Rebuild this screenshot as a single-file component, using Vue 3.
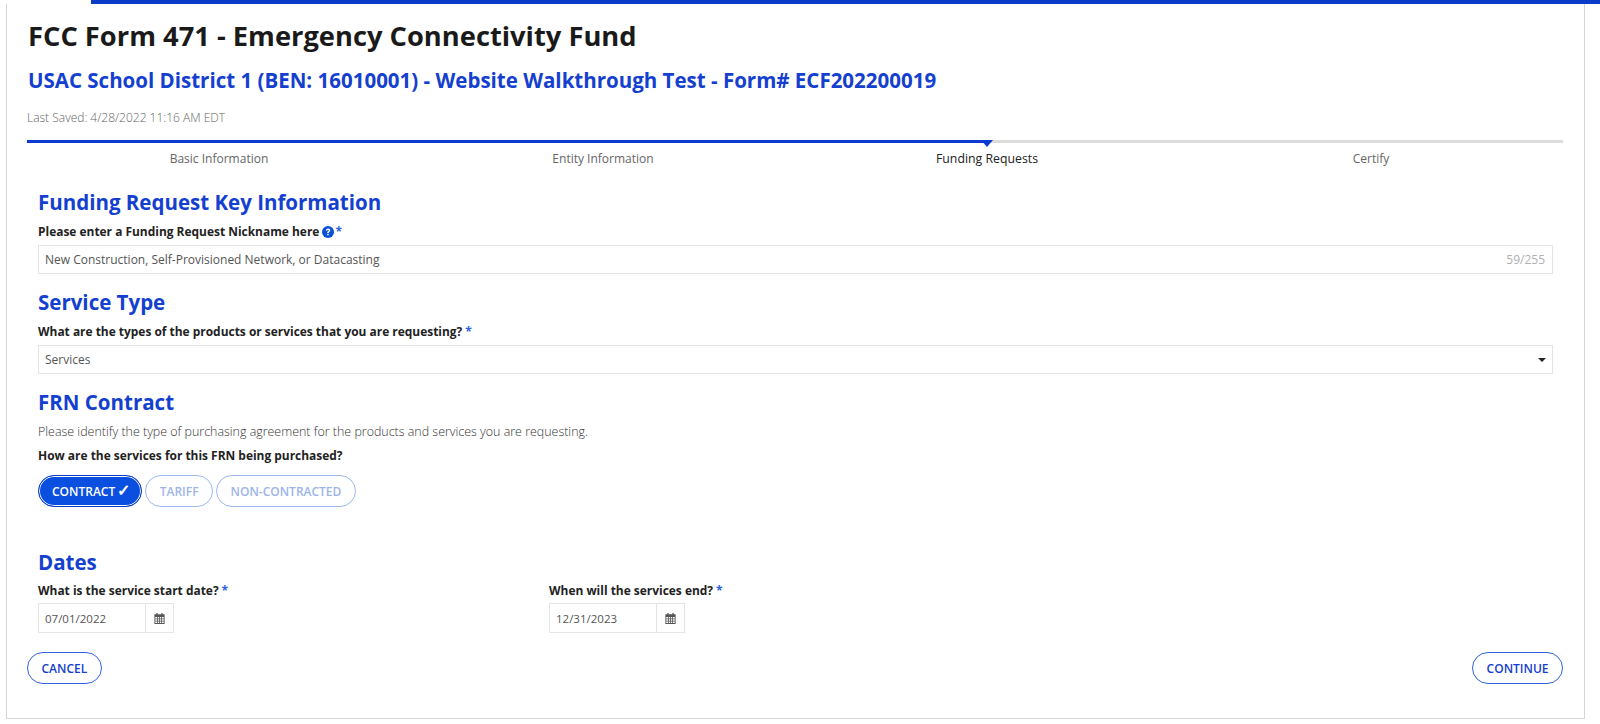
<template>
  <div class="page">
    <div class="topbar"></div>
    <main class="frame">
      <header class="head">
        <h1>FCC Form 471 - Emergency Connectivity Fund</h1>
        <h2 class="subtitle">USAC School District 1 (BEN: 16010001) - Website Walkthrough Test - Form# ECF202200019</h2>
        <p class="saved">Last Saved: 4/28/2022 11:16 AM EDT</p>
      </header>

      <div class="steps">
        <div
          v-for="(step, i) in steps"
          :key="step"
          class="step"
          :class="{ done: i < 2, current: i === 2 }"
        >
          <span class="step-line"></span>
          <span class="step-name">{{ step }}</span>
        </div>
      </div>

      <section class="form">
        <h3 class="first">Funding Request Key Information</h3>
        <label>
          Please enter a Funding Request Nickname here
          <svg class="help" viewBox="0 0 16 16" width="12" height="12">
            <circle cx="8" cy="8" r="8" fill="#0b4fd8" />
            <path d="M5.2 6.2C5.3 4.5 6.5 3.4 8.2 3.4c1.7 0 2.9 1 2.9 2.4 0 1-.6 1.6-1.4 2.1-.6.4-.8.7-.8 1.3H6.9c0-1 .3-1.6 1.1-2.2.6-.4 1-.7 1-1.1 0-.5-.4-.8-.9-.8-.6 0-1 .4-1.1 1zM6.9 10.2h2v2.1h-2z" fill="#fff" />
          </svg><span class="req tight">*</span>
        </label>
        <div class="field">
          <span>New Construction, Self-Provisioned Network, or Datacasting</span>
          <span class="count">59/255</span>
        </div>

        <h3>Service Type</h3>
        <label>What are the types of the products or services that you are requesting?<span class="req">*</span></label>
        <div class="field">
          <span>Services</span>
          <span class="caret"></span>
        </div>

        <h3>FRN Contract</h3>
        <p class="hint">Please identify the type of purchasing agreement for the products and services you are requesting.</p>
        <label>How are the services for this FRN being purchased?</label>
        <div class="pills">
          <button
            v-for="opt in options"
            :key="opt"
            class="pill"
            :class="{ active: opt === selected }"
          >
            {{ opt }}<span v-if="opt === selected" class="check">✓</span>
          </button>
        </div>

        <h3 class="dates-head">Dates</h3>
        <div class="dates">
          <div v-for="d in dates" :key="d.label" class="date-col">
            <label>{{ d.label }}<span class="req">*</span></label>
            <div class="date">
              <span class="date-val">{{ d.value }}</span>
              <span class="date-btn">
                <svg viewBox="0 0 14 14" width="11" height="11">
                  <path fill="#555" fill-rule="evenodd" d="M3 0h1.6v1.5h4.8V0H11v1.5h2.5V14H.5V1.5H3zM1.6 5v1.9h2.3V5zm3.3 0v1.9h1.6V5zm2.6 0v1.9h1.6V5zm2.6 0v1.9h2.3V5zM1.6 7.9v1.9h2.3V7.9zm3.3 0v1.9h1.6V7.9zm2.6 0v1.9h1.6V7.9zm2.6 0v1.9h2.3V7.9zM1.6 10.8v2h2.3v-2zm3.3 0v2h1.6v-2zm2.6 0v2h1.6v-2zm2.6 0v2h2.3v-2z" />
                </svg>
              </span>
            </div>
          </div>
        </div>
      </section>

      <div class="actions">
        <button class="outline">CANCEL</button>
        <button class="outline">CONTINUE</button>
      </div>
    </main>
  </div>
</template>

<script setup>
const steps = ['Basic Information', 'Entity Information', 'Funding Requests', 'Certify']
const options = ['CONTRACT', 'TARIFF', 'NON-CONTRACTED']
const selected = 'CONTRACT'
const dates = [
  { label: 'What is the service start date?', value: '07/01/2022' },
  { label: 'When will the services end?', value: '12/31/2023' }
]
</script>

<style>
html, body {
  margin: 0;
  background: #fff;
}
</style>

<style scoped>
.page {
  width: 1600px;
  height: 724px;
  overflow: hidden;
  font-family: "Open Sans", "Liberation Sans", sans-serif;
  color: #555;
  box-sizing: border-box;
}
.topbar {
  height: 4px;
  margin-left: 91px;
  background: #0a3cc8;
}
.frame {
  margin-left: 6px;
  width: 1579px;
  height: 715px;
  box-sizing: border-box;
  border: 1px solid #d6d6d6;
  border-top: none;
  padding: 0 20px;
}
.head {
  padding-left: 1px;
}
h1 {
  margin: 0;
  padding-top: 14px;
  font-size: 27.3px;
  line-height: 35px;
  font-weight: 700;
  color: #1a1a1a;
}
.subtitle {
  margin: 13px 0 0;
  font-size: 20.5px;
  line-height: 28px;
  font-weight: 700;
  color: #1440d0;
}
.saved {
  margin: 16px 0 0 -1px;
  font-size: 12px;
  line-height: 15px;
  font-weight: 300;
  color: #666;
}
.steps {
  display: grid;
  grid-template-columns: repeat(4, 1fr);
  margin-top: 15px;
  width: 1536px;
}
.step {
  display: flex;
  flex-direction: column;
  align-items: center;
  position: relative;
}
.step-line {
  display: block;
  align-self: stretch;
  height: 3px;
  background: #dcdcdc;
}
.step.done .step-line {
  background: #0a3cd0;
}
.step.current .step-line {
  background: linear-gradient(to right, #0a3cd0 50%, #dcdcdc 50%);
}
.step.current::after {
  content: "";
  position: absolute;
  top: 0;
  left: 50%;
  margin-left: -6px;
  border-left: 6px solid transparent;
  border-right: 6px solid transparent;
  border-top: 7px solid #0a3cd0;
}
.step-name {
  margin-top: 8px;
  font-size: 12px;
  line-height: 16px;
  color: #666;
}
.step.current .step-name {
  color: #222;
  font-size: 12.3px;
  font-weight: 500;
}
.form {
  padding: 0 10px 0 11px;
  width: 1515px;
  box-sizing: content-box;
}
h3 {
  margin: 14px 0 0;
  font-size: 20.5px;
  line-height: 28px;
  font-weight: 700;
  color: #1440d0;
}
h3.first {
  margin-top: 21px;
}
label {
  display: block;
  margin-top: 8px;
  font-size: 11.95px;
  line-height: 16px;
  font-weight: 700;
  color: #222;
}
.req {
  margin-left: 3px;
  color: #2a62e0;
}
.req.tight {
  margin-left: 1px;
}
.help {
  vertical-align: -2px;
}
.field {
  display: flex;
  justify-content: space-between;
  align-items: center;
  height: 29px;
  margin-top: 5px;
  padding: 0 7px 0 6px;
  box-sizing: border-box;
  border: 1px solid #e4e4e4;
  font-size: 12px;
  color: #555;
}
.count {
  color: #b0b0b0;
}
.caret {
  margin-right: -1px;
  border-left: 4px solid transparent;
  border-right: 4px solid transparent;
  border-top: 4px solid #222;
}
.hint {
  margin: 8px 0 0;
  font-size: 12.45px;
  line-height: 16px;
  font-weight: 300;
  color: #333;
}
.pills {
  display: flex;
  gap: 3px;
  margin-top: 11px;
}
.pill {
  height: 32px;
  padding: 0 13.5px;
  box-sizing: border-box;
  border: 1px solid #9db8ee;
  border-radius: 16px;
  background: #fff;
  font-family: inherit;
  font-size: 12px;
  font-weight: 600;
  color: #9db4ea;
}
.pill.active {
  padding: 0 11px 0 13px;
  background: #0a4fe0;
  color: #fff;
  border: 1px solid #0a3cc8;
  box-shadow: inset 0 0 0 1px #fff;
}
.check {
  margin-left: 2px;
  font-size: 16px;
  line-height: 1;
}
.dates-head {
  margin-top: 41px;
}
.dates {
  display: grid;
  grid-template-columns: 511px 1fr;
}
.date-col label {
  margin-top: 7px;
}
.date {
  display: flex;
  width: 136px;
  height: 30px;
  margin-top: 4px;
  box-sizing: border-box;
  border: 1px solid #e4e4e4;
  font-size: 11.5px;
  color: #555;
}
.date-val {
  flex: 1;
  display: flex;
  align-items: center;
  padding-left: 6px;
  border-right: 1px solid #e4e4e4;
}
.date-btn {
  width: 27px;
  display: flex;
  align-items: center;
  justify-content: center;
}
.actions {
  display: flex;
  justify-content: space-between;
  width: 1536px;
  margin-top: 19px;
}
.outline {
  height: 32px;
  padding: 0 13.5px;
  border: 1px solid #2f62dc;
  border-radius: 16px;
  background: #fff;
  font-family: inherit;
  font-size: 12px;
  font-weight: 600;
  color: #1440d0;
}
</style>
